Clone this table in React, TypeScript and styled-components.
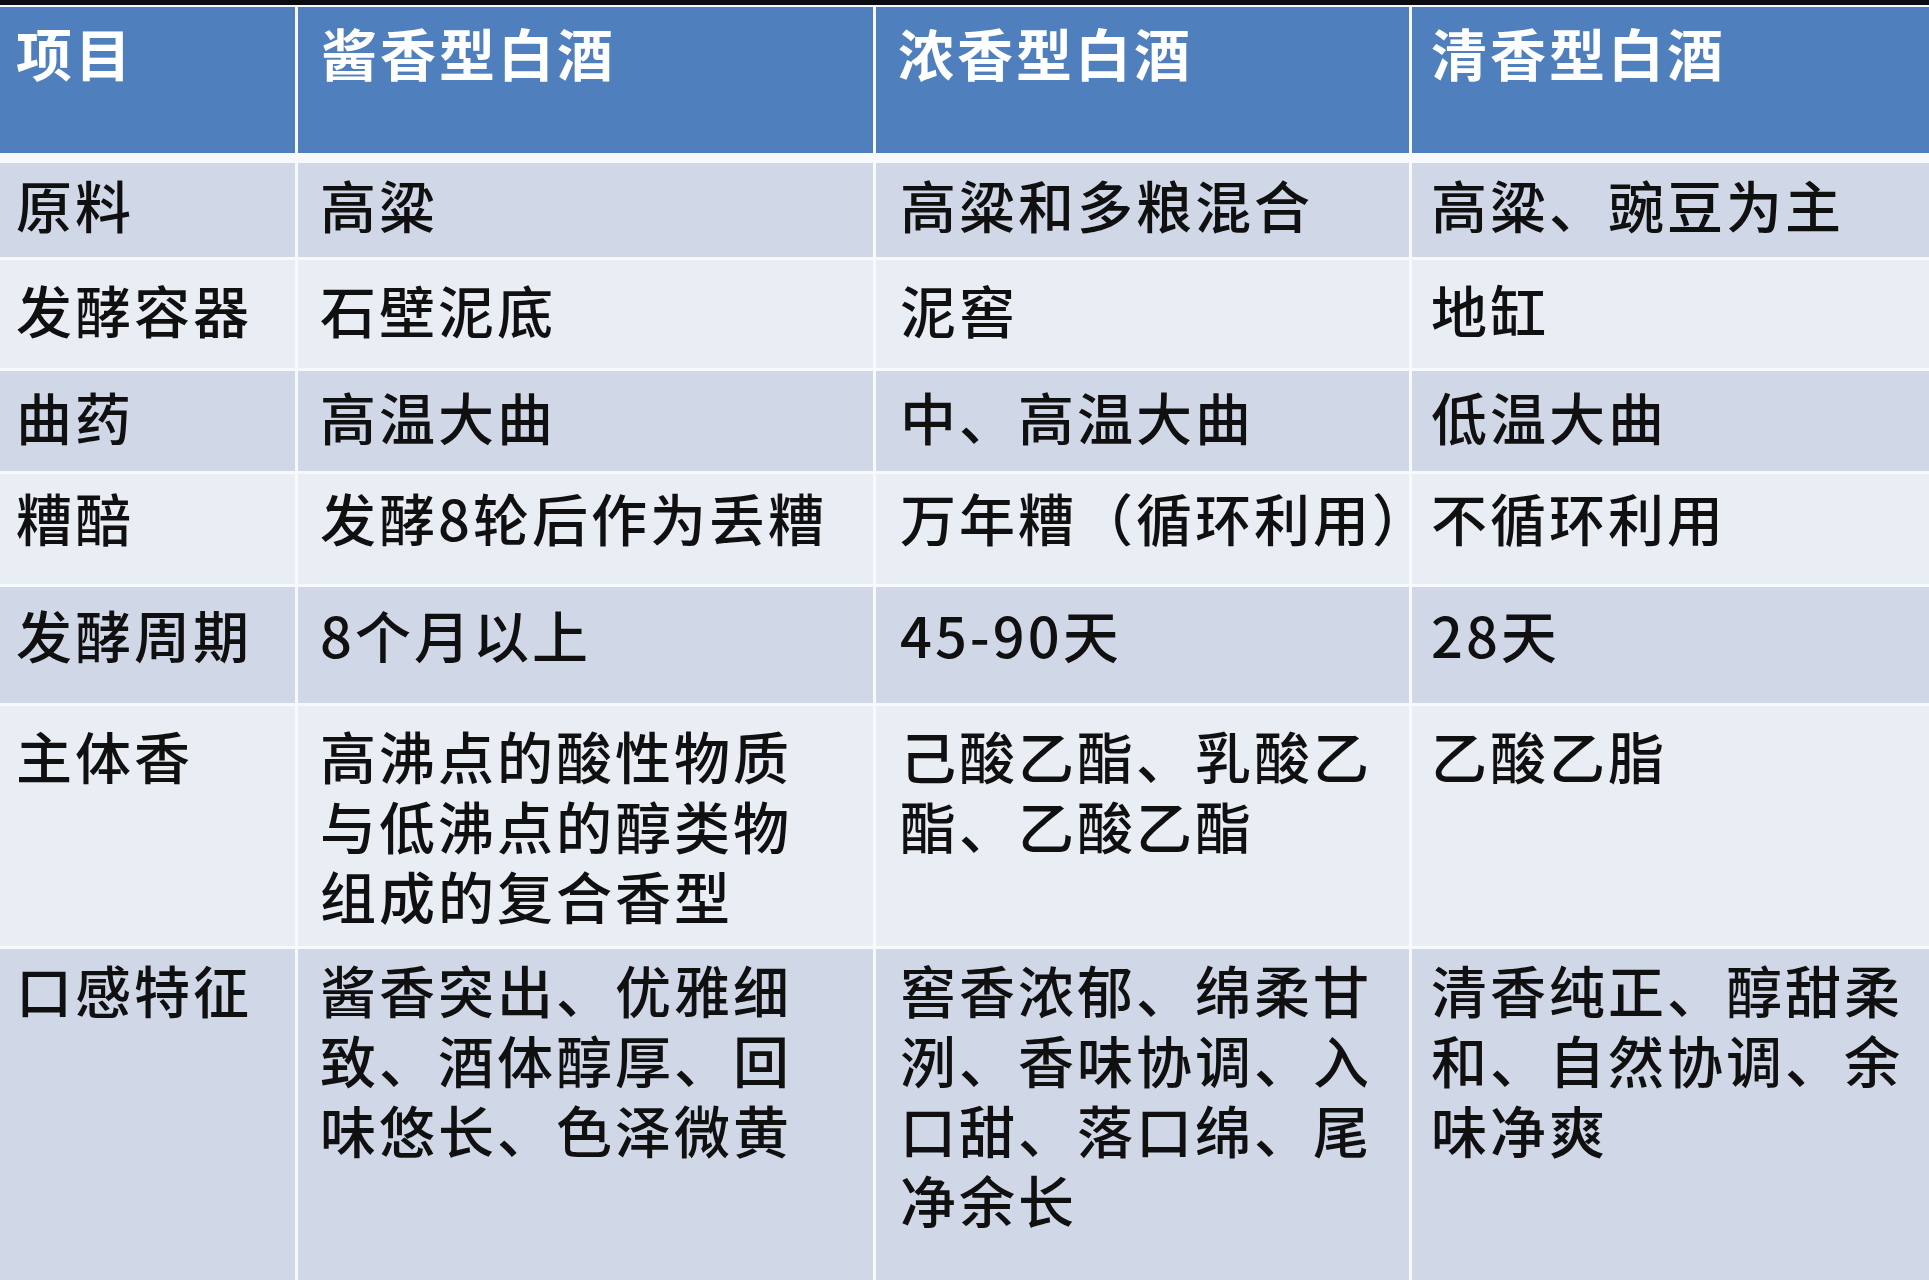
import React from "react";
import styled, { createGlobalStyle } from "styled-components";

const Global = createGlobalStyle`
  html, body { margin: 0; padding: 0; background: #ffffff; }
  body { font-family: "Noto Sans CJK SC", "Noto Sans", sans-serif; }
`;

type Tone = "head" | "dark" | "light";

const COLS = "295px 575px 533px 1fr";

const Frame = styled.div`
  width: 1929px;
  height: 1280px;
  overflow: hidden;
  box-sizing: border-box;
  border-top: 5px solid #0b0c10;
  padding-top: 2px;
  background: #f7f9fc;
  display: flex;
  flex-direction: column;
  gap: 3px;
`;

const Row = styled.div<{ $h: number; $head?: boolean }>`
  display: grid;
  grid-template-columns: ${COLS};
  column-gap: 3px;
  height: ${(p) => p.$h}px;
  flex: 0 0 auto;
  margin-bottom: ${(p) => (p.$head ? 7 : 0)}px;
`;

const PAD = [16, 22, 24, 19];
const HEAD_PAD = [16, 23, 22, 19];

const Cell = styled.div<{ $tone: Tone; $col: number; $top: number }>`
  box-sizing: border-box;
  padding: ${(p) => p.$top}px 0 0
    ${(p) => (p.$tone === "head" ? HEAD_PAD[p.$col] : PAD[p.$col])}px;
  background: ${(p) =>
    p.$tone === "head" ? "#4f80bd" : p.$tone === "dark" ? "#d0d8e7" : "#e9edf4"};
  color: ${(p) => (p.$tone === "head" ? "#ffffff" : "#101010")};
  font-family: "Noto Sans CJK SC", "Noto Sans", sans-serif;
  font-size: 56px;
  line-height: 70px;
  letter-spacing: 3px;
  font-weight: ${(p) => (p.$tone === "head" ? 700 : 500)};
  overflow: visible;
`;

const Line = styled.span`
  display: block;
  white-space: nowrap;
`;

type RowData = { h: number; top: number; cells: string[][] };

const header: string[] = ["项目", "酱香型白酒", "浓香型白酒", "清香型白酒"];

const rows: RowData[] = [
  { h: 94, top: 6, cells: [["原料"], ["高粱"], ["高粱和多粮混合"], ["高粱、豌豆为主"]] },
  { h: 108, top: 14, cells: [["发酵容器"], ["石壁泥底"], ["泥窖"], ["地缸"]] },
  { h: 100, top: 10, cells: [["曲药"], ["高温大曲"], ["中、高温大曲"], ["低温大曲"]] },
  { h: 110, top: 8, cells: [["糟醅"], ["发酵8轮后作为丢糟"], ["万年糟（循环利用）"], ["不循环利用"]] },
  { h: 116, top: 12, cells: [["发酵周期"], ["8个月以上"], ["45-90天"], ["28天"]] },
  {
    h: 240,
    top: 14,
    cells: [
      ["主体香"],
      ["高沸点的酸性物质", "与低沸点的醇类物", "组成的复合香型"],
      ["己酸乙酯、乳酸乙", "酯、乙酸乙酯"],
      ["乙酸乙脂"],
    ],
  },
  {
    h: 340,
    top: 5,
    cells: [
      ["口感特征"],
      ["酱香突出、优雅细", "致、酒体醇厚、回", "味悠长、色泽微黄"],
      ["窖香浓郁、绵柔甘", "洌、香味协调、入", "口甜、落口绵、尾", "净余长"],
      ["清香纯正、醇甜柔", "和、自然协调、余", "味净爽"],
    ],
  },
];

export default function App() {
  return (
    <>
      <Global />
      <Frame>
        <Row $h={146} $head>
          {header.map((t, i) => (
            <Cell key={i} $tone="head" $col={i} $top={10}>
              <Line>{t}</Line>
            </Cell>
          ))}
        </Row>
        {rows.map((r, ri) => (
          <Row key={ri} $h={r.h}>
            {r.cells.map((lines, ci) => (
              <Cell
                key={ci}
                $tone={ri % 2 === 0 ? "dark" : "light"}
                $col={ci}
                $top={r.top}
              >
                {lines.map((l, li) => (
                  <Line key={li}>{l}</Line>
                ))}
              </Cell>
            ))}
          </Row>
        ))}
      </Frame>
    </>
  );
}
